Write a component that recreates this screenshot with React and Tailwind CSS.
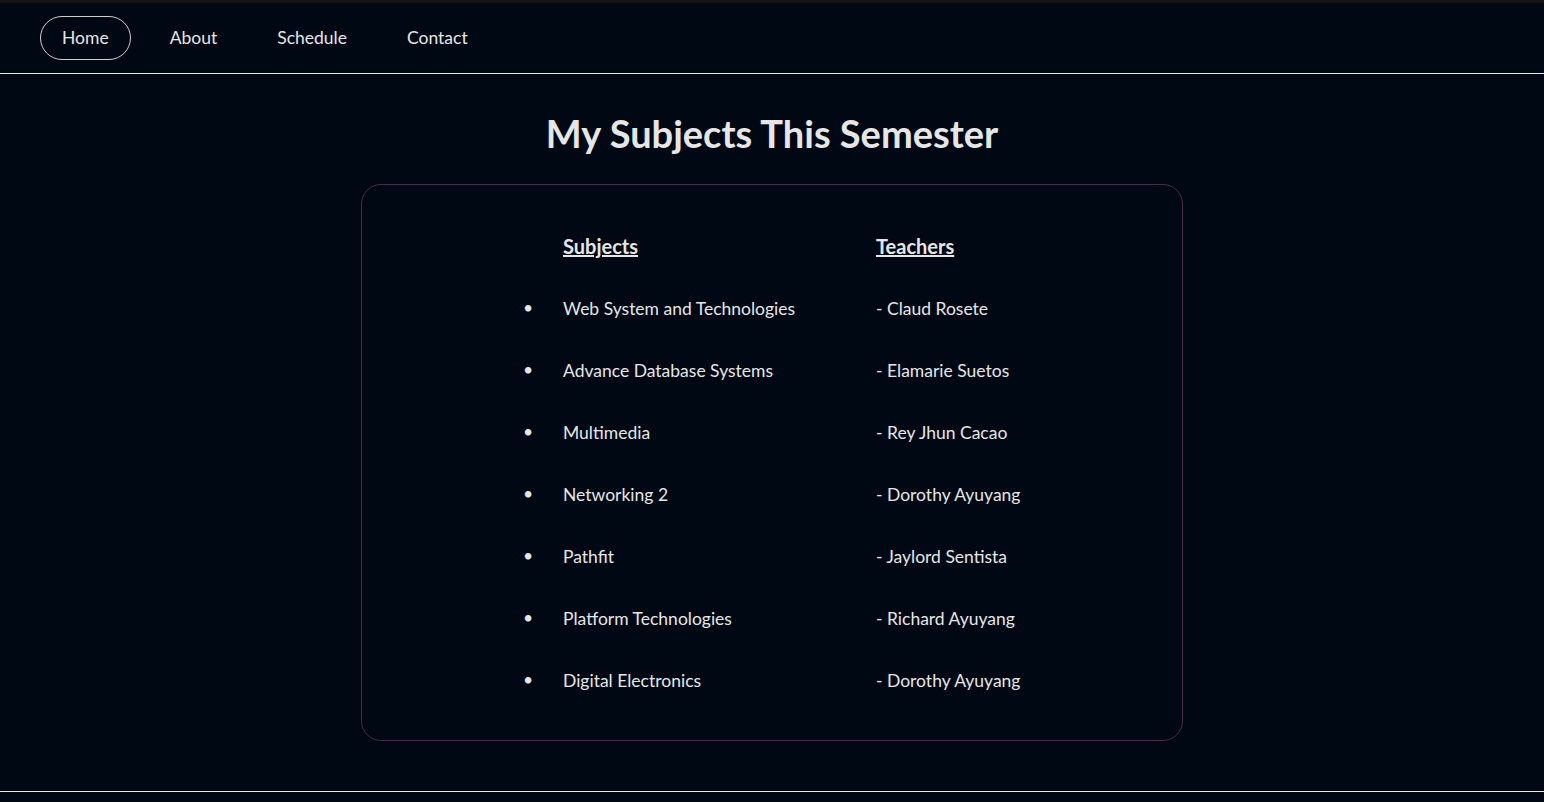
import React from 'react';

const navLinks = ['Home', 'About', 'Schedule', 'Contact'];

const subjects = [
  { name: 'Web System and Technologies', teacher: 'Claud Rosete' },
  { name: 'Advance Database Systems', teacher: 'Elamarie Suetos' },
  { name: 'Multimedia', teacher: 'Rey Jhun Cacao' },
  { name: 'Networking 2', teacher: 'Dorothy Ayuyang' },
  { name: 'Pathfit', teacher: 'Jaylord Sentista' },
  { name: 'Platform Technologies', teacher: 'Richard Ayuyang' },
  { name: 'Digital Electronics', teacher: 'Dorothy Ayuyang' },
];

const App = () => {
  return (
    <div
      className="min-h-screen bg-[#000814] text-[#e6e6e6] border-t-[3px] border-[#171412]"
      style={{ fontFamily: '"Lato", "Open Sans", sans-serif' }}
    >
      {/* Navbar */}
      <nav className="h-[71px] flex items-center gap-[18px] px-10 border-b border-[#e8e8e8]">
        {navLinks.map((link, i) => (
          <a
            key={link}
            href="#"
            className={`h-[44px] flex items-center px-5 rounded-full text-[17.5px] ${
              i === 0 ? 'border border-[#cfcfcf] px-[21px]' : 'border border-transparent'
            }`}
          >
            {link}
          </a>
        ))}
      </nav>

      {/* Main */}
      <main className="flex flex-col items-center pt-[40px] pb-[50px] border-b border-[#e8e8e8]">
        <h1 className="text-[38px] font-bold leading-none mb-[32px]">
          My Subjects This Semester
        </h1>

        <div className="w-[822px] h-[557px] rounded-[20px] border border-[#4d2a45] flex justify-center pt-[46px]">
          <div className="w-[500px] pl-[38px]">
            <div className="grid grid-cols-[316px_1fr] h-[24px] items-center">
              <span className="pl-[3px] font-bold underline text-[20px]">Subjects</span>
              <span className="font-bold underline text-[20px]">Teachers</span>
            </div>
            <ul className="mt-[41px] flex flex-col gap-[38px]">
              {subjects.map((s) => (
                <li key={s.name} className="grid grid-cols-[316px_1fr] h-[24px] items-center text-[17.5px]">
                  <span className="relative pl-[3px]">
                    <span className="absolute left-[-37px] top-[-1px]">•</span>
                    {s.name}
                  </span>
                  <span>- {s.teacher}</span>
                </li>
              ))}
            </ul>
          </div>
        </div>
      </main>
    </div>
  );
};

export default App;
